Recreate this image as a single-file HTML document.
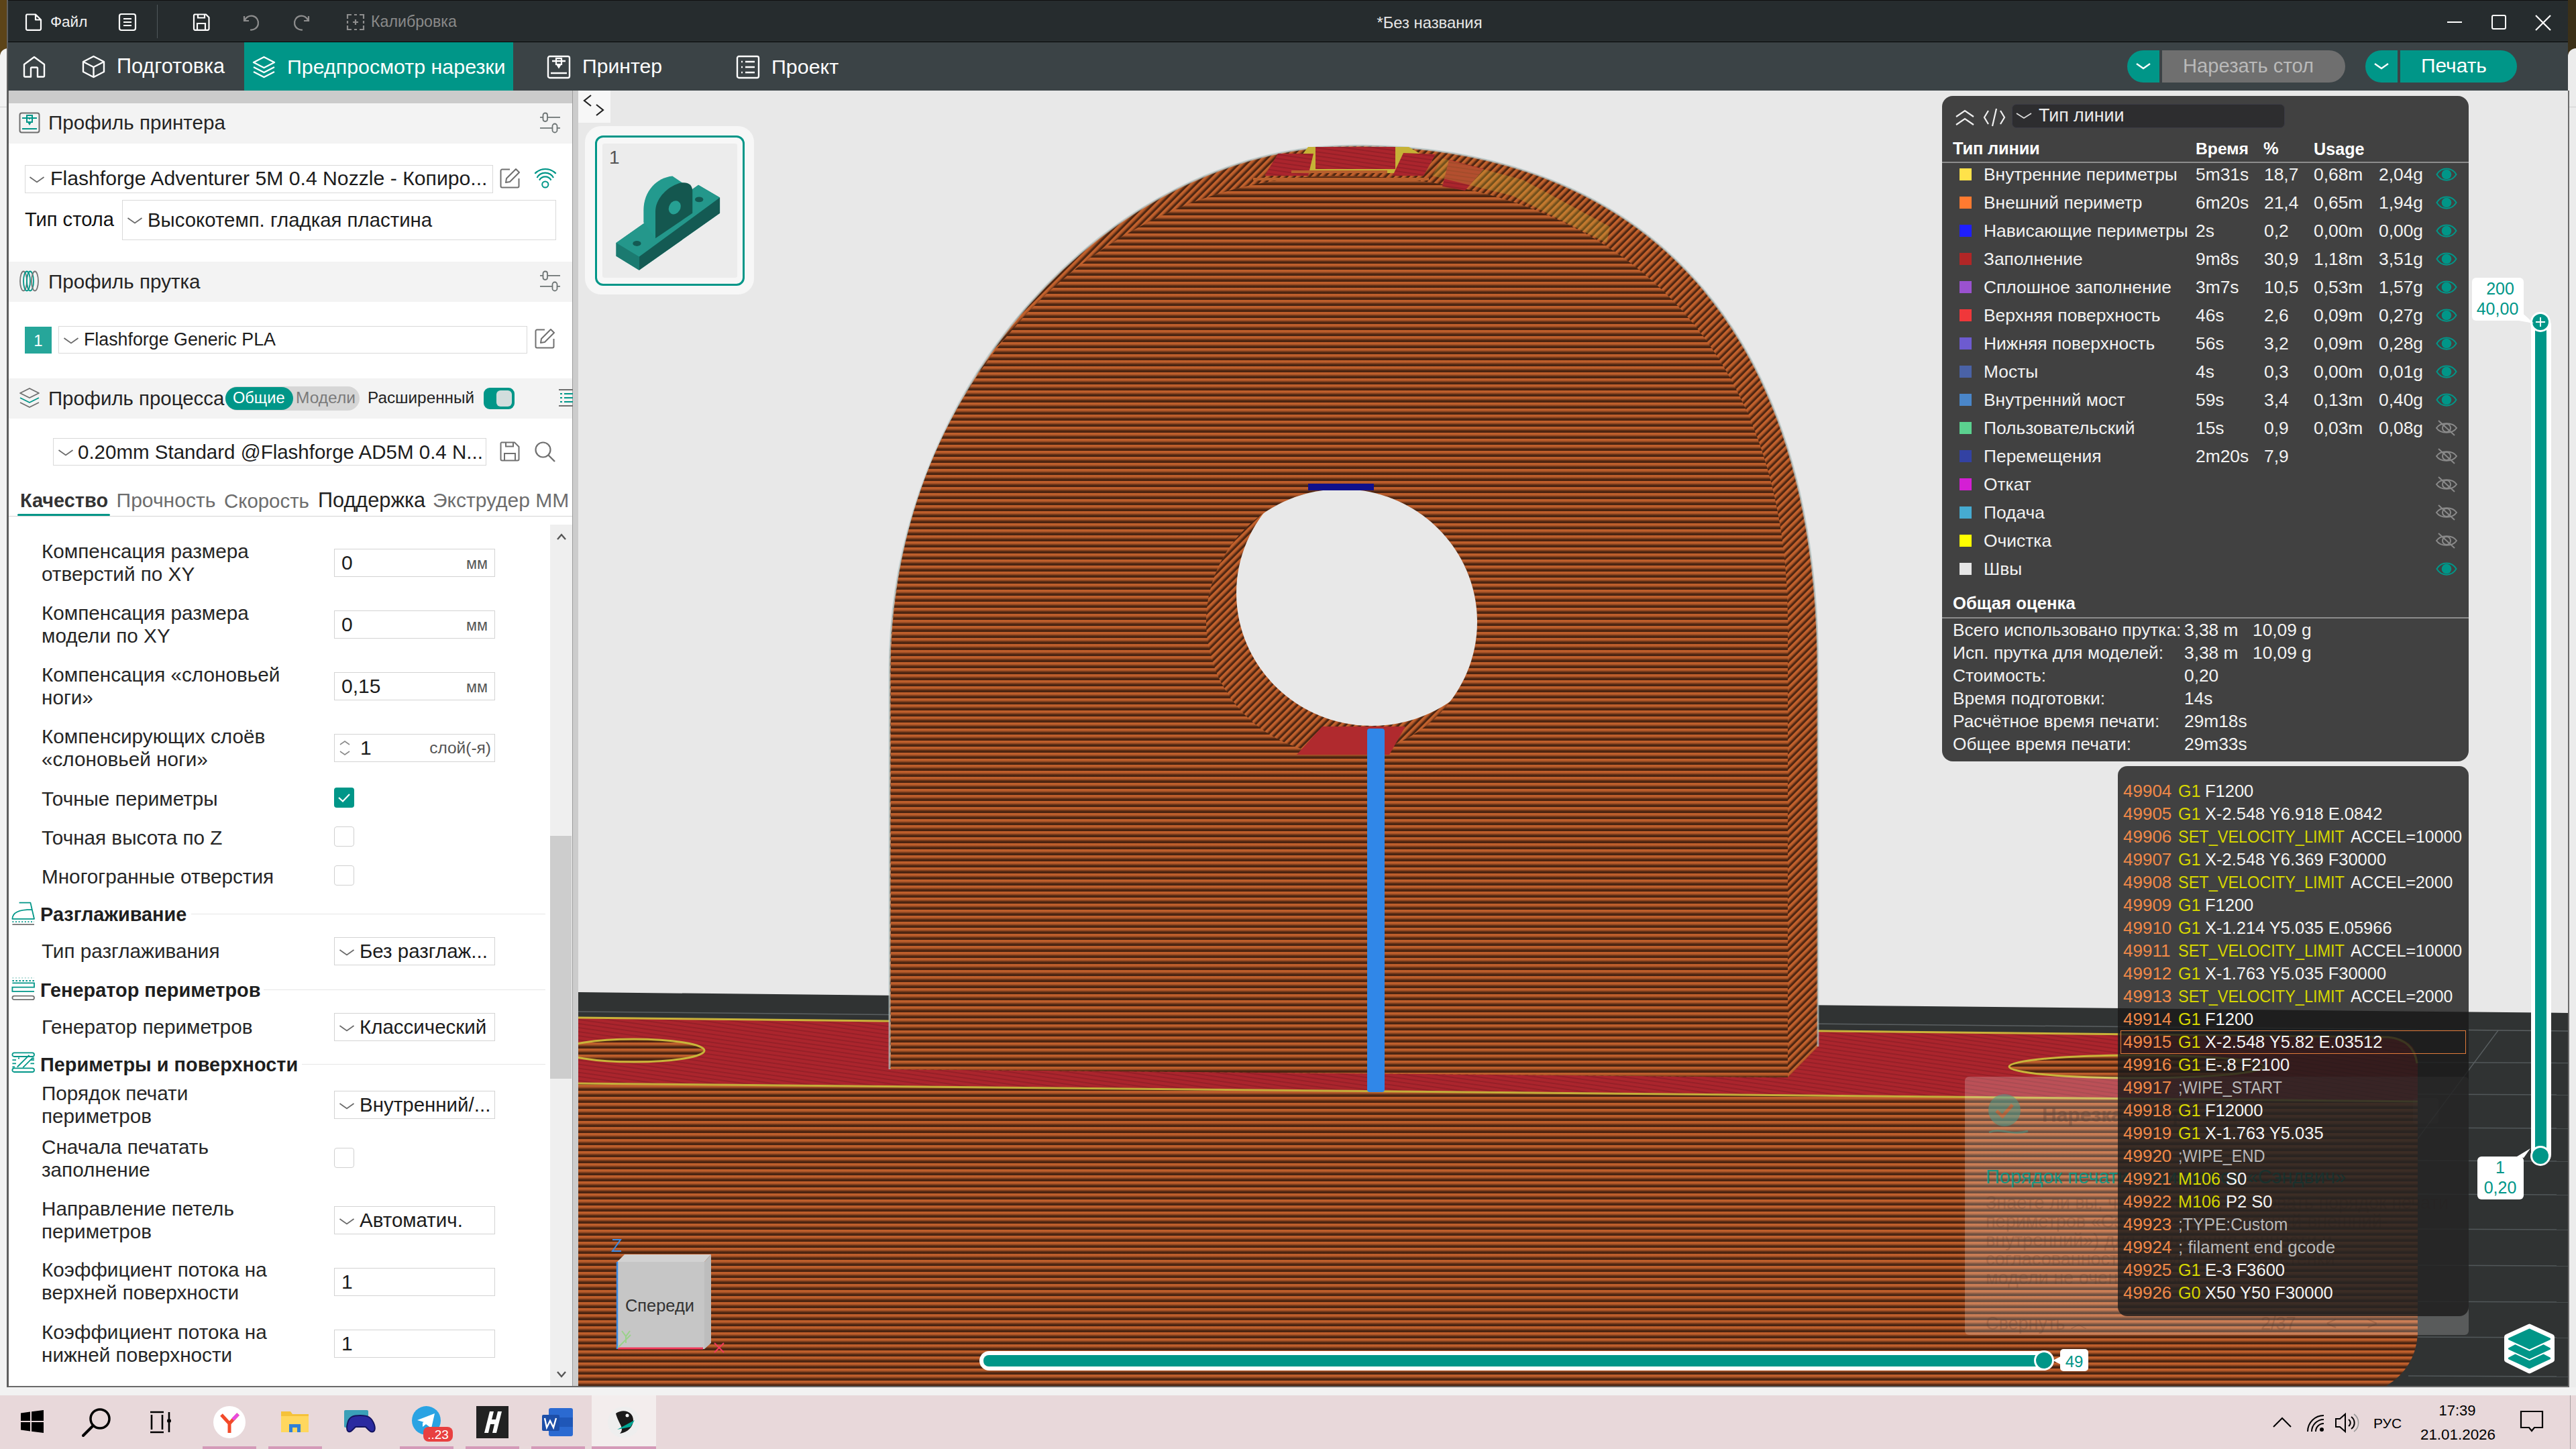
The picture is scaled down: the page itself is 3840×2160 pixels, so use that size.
<!DOCTYPE html><html><head><meta charset="utf-8"><style>html,body{margin:0;padding:0;}body{width:3840px;height:2160px;overflow:hidden;position:relative;background:#f3f3f3;font-family:"Liberation Sans",sans-serif;}.a{position:absolute;}.t{position:absolute;white-space:pre;line-height:1;}svg.a{overflow:visible;}</style></head><body>
<div class="a" style="left:0px;top:0px;width:12px;height:84px;background:#5d4418;"></div>
<div class="a" style="left:3828px;top:0px;width:12px;height:84px;background:#3b3018;"></div>
<div class="a" style="left:0px;top:72px;width:12px;height:2000px;background:#f2f2f2;border-top-left-radius:12px;"></div>
<div class="a" style="left:3828px;top:72px;width:12px;height:2000px;background:#ececec;border-top-left-radius:12px;"></div>
<div class="a" style="left:0px;top:159px;width:10px;height:1px;background:#d0d0d0;"></div>
<div class="a" style="left:3830px;top:159px;width:10px;height:1px;background:#d0d0d0;"></div>
<div class="a" style="left:10px;top:0px;width:3px;height:2068px;background:#5f5f5f;"></div>
<div class="a" style="left:13px;top:2066px;width:3815px;height:2px;background:#6a6a6a;"></div>
<div class="a" style="left:3828px;top:135px;width:2px;height:1933px;background:#6a6a6a;"></div>
<div class="a" style="left:12px;top:0px;width:3816px;height:62px;background:#262c2e;"></div>
<div class="a" style="left:12px;top:0px;width:3816px;height:1px;background:#111;"></div>
<div class="a" style="left:12px;top:62px;width:3816px;height:1px;background:#050505;"></div>
<div class="a" style="left:12px;top:63px;width:3816px;height:72px;background:#3b4346;"></div>
<svg class="a" style="left:36px;top:19px;" width="28" height="28" viewBox="0 0 28 28"><path d="M4 2.5H17L25 10.5V24a1.8 1.8 0 0 1-1.8 1.8H4.8A1.8 1.8 0 0 1 3 24V4.3A1.8 1.8 0 0 1 4.8 2.5Z M17 2.5V10.5H25" fill="none" stroke="#fff" stroke-width="2.2" stroke-linejoin="round"/></svg>
<div class="t" style="left:75.0px;top:21.9px;font-size:22.5px;color:#f2f2f2;">Файл</div>
<svg class="a" style="left:176px;top:19px;" width="28" height="28" viewBox="0 0 28 28"><rect x="2" y="2" width="24" height="24" rx="3" fill="none" stroke="#fff" stroke-width="2.2"/><path d="M8 9H20M8 14H20M8 19H20" stroke="#fff" stroke-width="2.2"/></svg>
<div class="a" style="left:234px;top:7px;width:1px;height:50px;background:#50585b;"></div>
<svg class="a" style="left:286px;top:19px;" width="28" height="28" viewBox="0 0 28 28"><path d="M4 2.5H21L25.5 7V24a1.8 1.8 0 0 1-1.8 1.8H4.8A1.8 1.8 0 0 1 3 24V4.3A1.8 1.8 0 0 1 4.8 2.5Z" fill="none" stroke="#fff" stroke-width="2.2" stroke-linejoin="round"/><path d="M9 2.5V7.5H19V2.5M8 25.8V16H20V25.8" fill="none" stroke="#fff" stroke-width="2.2"/></svg>
<svg class="a" style="left:358px;top:19px;" width="30" height="28" viewBox="0 0 30 28"><path d="M6 5V12H13" fill="none" stroke="#8d8d8d" stroke-width="2.2"/><path d="M6.5 12A10.5 10.5 0 1 1 15 25.5" fill="none" stroke="#8d8d8d" stroke-width="2.2"/></svg>
<svg class="a" style="left:436px;top:19px;" width="30" height="28" viewBox="0 0 30 28"><path d="M24 5V12H17" fill="none" stroke="#8d8d8d" stroke-width="2.2"/><path d="M23.5 12A10.5 10.5 0 1 0 15 25.5" fill="none" stroke="#8d8d8d" stroke-width="2.2"/></svg>
<svg class="a" style="left:515px;top:19px;" width="30" height="28" viewBox="0 0 30 28"><path d="M3 9V3H9M21 3H27V9M27 19V25H21M9 25H3V19M13 3H17M13 25H17M3 12V16M27 12V16M15 10V18M11 14H19" fill="none" stroke="#8d8d8d" stroke-width="2.2"/></svg>
<div class="t" style="left:553.0px;top:21.4px;font-size:23.2px;color:#8a8a8a;">Калибровка</div>
<div class="t" style="left:1631.0px;width:1000px;text-align:center;top:22.3px;font-size:23.8px;color:#e6e6e6;">*Без названия</div>
<div class="a" style="left:3648px;top:32px;width:22px;height:2px;background:#fff;"></div>
<div class="a" style="left:3714px;top:22px;width:22px;height:22px;background:transparent;border:2px solid #fff;border-radius:3px;box-sizing:border-box;"></div>
<svg class="a" style="left:3778px;top:21px;" width="26" height="26" viewBox="0 0 26 26"><path d="M2 2L24 24M24 2L2 24" stroke="#fff" stroke-width="2.2"/></svg>
<svg class="a" style="left:33px;top:81px;" width="36" height="36" viewBox="0 0 36 36"><path d="M3 15L18 4L33 15V32a1.5 1.5 0 0 1-1.5 1.5H23V21a1.5 1.5 0 0 0-1.5-1.5h-7A1.5 1.5 0 0 0 13 21V33.5H4.5A1.5 1.5 0 0 1 3 32Z" fill="none" stroke="#fff" stroke-width="2.4" stroke-linejoin="round"/></svg>
<svg class="a" style="left:121px;top:81px;" width="37" height="37" viewBox="0 0 37 37"><path d="M18.5 3L34 11V26L18.5 34L3 26V11Z M3 11L18.5 19L34 11 M18.5 19V34" fill="none" stroke="#fff" stroke-width="2.4" stroke-linejoin="round"/></svg>
<div class="t" style="left:174.0px;top:83.4px;font-size:30.6px;color:#ffffff;">Подготовка</div>
<div class="a" style="left:364px;top:63px;width:401px;height:72px;background:#009688;"></div>
<svg class="a" style="left:375px;top:81px;" width="37" height="37" viewBox="0 0 37 37"><path d="M18.5 4L34 12L18.5 20L3 12Z" fill="none" stroke="#fff" stroke-width="2.4" stroke-linejoin="round"/><path d="M3 19L18.5 27L34 19M3 26L18.5 34L34 26" fill="none" stroke="#fff" stroke-width="2.4" stroke-linejoin="round"/></svg>
<div class="t" style="left:428.0px;top:83.6px;font-size:30.4px;color:#ffffff;">Предпросмотр нарезки</div>
<svg class="a" style="left:815px;top:82px;" width="36" height="36" viewBox="0 0 36 36"><rect x="2" y="2" width="32" height="32" rx="2.5" fill="none" stroke="#fff" stroke-width="2.4"/><path d="M6 27H30M8 9H28" stroke="#fff" stroke-width="2.4"/><rect x="14" y="5" width="8" height="9" fill="none" stroke="#fff" stroke-width="2.2"/><path d="M15 14L18 19L21 14" fill="#fff" stroke="#fff" stroke-width="1.5"/></svg>
<div class="t" style="left:868.0px;top:83.7px;font-size:30.2px;color:#ffffff;">Принтер</div>
<svg class="a" style="left:1097px;top:82px;" width="36" height="36" viewBox="0 0 36 36"><rect x="2" y="2" width="32" height="32" rx="2.5" fill="none" stroke="#fff" stroke-width="2.4"/><path d="M8 10H10M14 10H28M8 18H10M14 18H28M8 26H10M14 26H28" stroke="#fff" stroke-width="2.4"/></svg>
<div class="t" style="left:1150.0px;top:83.6px;font-size:30.4px;color:#ffffff;">Проект</div>
<div class="a" style="left:3171px;top:75px;width:48px;height:48px;background:#009688;border-radius:24px 0 0 24px;"></div>
<svg class="a" style="left:3182px;top:91px;" width="26" height="16" viewBox="0 0 26 16"><path d="M3 4L13 11L23 4" fill="none" stroke="#fff" stroke-width="2.4"/></svg>
<div class="a" style="left:3223px;top:75px;width:273px;height:48px;background:#6f6f6f;border-radius:0 24px 24px 0;"></div>
<div class="t" style="left:3254.0px;top:84.0px;font-size:29.2px;color:#b9b9b9;">Нарезать стол</div>
<div class="a" style="left:3526px;top:75px;width:48px;height:48px;background:#009688;border-radius:24px 0 0 24px;"></div>
<svg class="a" style="left:3537px;top:91px;" width="26" height="16" viewBox="0 0 26 16"><path d="M3 4L13 11L23 4" fill="none" stroke="#fff" stroke-width="2.4"/></svg>
<div class="a" style="left:3578px;top:75px;width:174px;height:48px;background:#009688;border-radius:0 24px 24px 0;"></div>
<div class="t" style="left:3609.0px;top:83.4px;font-size:29.9px;color:#ffffff;">Печать</div>
<svg class="a" style="left:0px;top:0px;" width="3840" height="2160" viewBox="0 0 3840 2160"><defs>
<linearGradient id="sg" x1="0" y1="0" x2="0" y2="1">
<stop offset="0" stop-color="#b5592a"/><stop offset="0.12" stop-color="#c3612c"/><stop offset="0.34" stop-color="#b45a2a"/><stop offset="0.5" stop-color="#8a441f"/><stop offset="0.66" stop-color="#5a2c14"/><stop offset="0.78" stop-color="#4a2411"/><stop offset="1" stop-color="#4a2411"/></linearGradient>
<pattern id="stripes" patternUnits="userSpaceOnUse" x="0" y="6" width="40" height="9"><rect width="40" height="9" fill="url(#sg)"/></pattern>
<linearGradient id="bg2" x1="0" y1="0" x2="1" y2="1">
<stop offset="0" stop-color="#d06a30"/><stop offset="0.45" stop-color="#c25f2b"/><stop offset="0.7" stop-color="#6e3418"/><stop offset="1" stop-color="#56290f"/></linearGradient>
<linearGradient id="bandg" x1="0" y1="0" x2="0" y2="1"><stop offset="0" stop-color="#bb5b2a"/><stop offset="0.15" stop-color="#c8652d"/><stop offset="0.4" stop-color="#b65a2a"/><stop offset="0.56" stop-color="#8a441f"/><stop offset="0.7" stop-color="#5a2c14"/><stop offset="0.8" stop-color="#4c2511"/><stop offset="1" stop-color="#4b2511"/></linearGradient><pattern id="band" patternUnits="userSpaceOnUse" width="20" height="8" patternTransform="rotate(-45)"><rect width="20" height="8" fill="url(#bandg)"/></pattern>
<pattern id="red" patternUnits="userSpaceOnUse" width="20" height="6" patternTransform="rotate(8)"><rect width="20" height="6" fill="#ab252d"/><rect y="4" width="20" height="2" fill="#962028"/></pattern>
<clipPath id="frontHole"><ellipse cx="2000" cy="927" rx="202" ry="198"/></clipPath>
</defs><rect x="862" y="135" width="2966" height="1931" fill="#e8e8e8"/><polygon points="862,1479 3828,1510 3828,2066 862,2066" fill="#303333"/><line x1="862" y1="1508" x2="3828" y2="1537" stroke="#5b6062" stroke-width="1.5"/><line x1="3590" y1="1583.5" x2="3828" y2="1584.5" stroke="#52585a" stroke-width="1.5"/><line x1="3590" y1="1631" x2="3828" y2="1632" stroke="#52585a" stroke-width="1.5"/><line x1="3590" y1="1681" x2="3828" y2="1682" stroke="#52585a" stroke-width="1.5"/><line x1="3590" y1="1730" x2="3828" y2="1731" stroke="#52585a" stroke-width="1.5"/><line x1="3590" y1="1780" x2="3828" y2="1781" stroke="#52585a" stroke-width="1.5"/><line x1="3590" y1="1832" x2="3828" y2="1833" stroke="#52585a" stroke-width="1.5"/><line x1="3590" y1="1886" x2="3828" y2="1887" stroke="#52585a" stroke-width="1.5"/><line x1="3590" y1="1940" x2="3828" y2="1941" stroke="#52585a" stroke-width="1.5"/><line x1="3590" y1="1993" x2="3828" y2="1994" stroke="#52585a" stroke-width="1.5"/><line x1="3590" y1="2051" x2="3828" y2="2052" stroke="#52585a" stroke-width="1.5"/><line x1="3724" y1="1536" x2="3330" y2="2066" stroke="#5a6062" stroke-width="1.3"/><path d="M862,1516 L3560,1545 Q3600,1548 3604,1580 L3604,1641 L862,1614 Z" fill="url(#red)"/><path d="M862,1517 L3560,1546 Q3598,1550 3603,1585" fill="none" stroke="#c9b33a" stroke-width="3"/><ellipse cx="945" cy="1566" rx="105" ry="17" fill="url(#stripes)" stroke="#c8b53a" stroke-width="3"/><ellipse cx="3185" cy="1590" rx="190" ry="17" fill="url(#stripes)" stroke="#c8b53a" stroke-width="3"/><path d="M862,1614 L3604,1641 L3604,1990 Q3600,2040 3557,2066 L862,2066 Z" fill="url(#stripes)"/><path d="M862,1615 L3604,1642" stroke="#c4ae3a" stroke-width="3"/><path d="M1326,1594 L1326,1000 C1326,585 1651,217 2018,217 C2461,217 2710,499 2710,1000 L2710,1560 L2665,1606 Z" fill="url(#band)"/><path d="M1326,1594 L1326,1000 C1326,585 1651,217 2018,217 C2461,217 2710,499 2710,1000 L2710,1560" fill="none" stroke="#b5c6c6" stroke-width="3" opacity="0.7"/><path d="M1328,1594 L1328,1000 C1328,570 1640,262 1996,262 C2411,262 2665,515 2665,929 L2665,1606 Z" fill="url(#stripes)"/><path d="M1950,219 L2100,219 L2135,240 L2110,258 L1920,258 Z" fill="#c6b236"/><rect x="1961" y="219" width="119" height="33" fill="url(#red)"/><path d="M1905,229 L1958,229 L1950,262 L1885,262 Z" fill="url(#red)"/><path d="M2092,228 L2140,230 L2122,262 L2076,262 Z" fill="url(#red)"/><path d="M2160,238 L2212,252 L2184,284 L2150,278 Z" fill="url(#red)"/><path d="M2150,236 L2270,268 L2400,338 L2395,362 L2255,292 L2135,262 Z" fill="#c6b236" opacity="0.3"/><path d="M1925,256 L2068,256 M1868,267 L2130,267" stroke="#b8602c" stroke-width="4"/><ellipse cx="2000" cy="927" rx="202" ry="198" fill="url(#band)"/><ellipse cx="2045" cy="884" rx="202" ry="198" fill="#e8e8e8" clip-path="url(#frontHole)"/><path d="M1933,1125 L1971,1083 L2095,1083 L2071,1125 Z" fill="#b02a2e"/><rect x="1950" y="721" width="98" height="10" fill="#10108c"/><rect x="2038" y="1086" width="26" height="542" rx="4" fill="#3087e8"/></svg>
<div class="a" style="left:13px;top:135px;width:840px;height:19px;background:#cbcbcb;"></div>
<div class="a" style="left:13px;top:154px;width:840px;height:1912px;background:#ffffff;"></div>
<div class="a" style="left:853px;top:135px;width:1px;height:1931px;background:#9c9c9c;"></div>
<div class="a" style="left:854px;top:135px;width:8px;height:1931px;background:#cccccc;"></div>
<div class="a" style="left:13px;top:154px;width:840px;height:60px;background:#f3f3f3;"></div>
<div class="a" style="left:13px;top:390px;width:840px;height:60px;background:#f3f3f3;"></div>
<div class="a" style="left:13px;top:564px;width:840px;height:60px;background:#f3f3f3;"></div>
<svg class="a" style="left:28px;top:167px;" width="32" height="32" viewBox="0 0 32 32"><rect x="1.5" y="1.5" width="29" height="29" rx="3" fill="none" stroke="#6e6e6e" stroke-width="2"/><path d="M5 9H27M5 25H27" stroke="#009688" stroke-width="2"/><rect x="12" y="5" width="8" height="10" fill="none" stroke="#009688" stroke-width="2"/><path d="M13 15L16 20L19 15Z" fill="#009688"/><rect x="15" y="9" width="2" height="2" fill="#009688"/></svg>
<div class="t" style="left:72.0px;top:168.1px;font-size:29.6px;color:#242424;">Профиль принтера</div>
<svg class="a" style="left:805px;top:167px;" width="32" height="32" viewBox="0 0 32 32"><path d="M0 7.8H30M0 23.9H30" stroke="#6d7474" stroke-width="1.8"/><rect x="4.5" y="1.5" width="6.5" height="12.5" rx="3.2" fill="#f3f3f3" stroke="#6d7474" stroke-width="1.8"/><rect x="18.5" y="17.5" width="7" height="13" rx="3.5" fill="#f3f3f3" stroke="#6d7474" stroke-width="1.8"/></svg>
<div class="a" style="left:37px;top:246px;width:698px;height:42px;background:#fff;border:1px solid #d9d9d9;box-sizing:border-box;"></div>
<svg class="a" style="left:43px;top:262px;" width="24" height="12" viewBox="0 0 24 12"><path d="M1.5 2L12 9.5L22.5 2" fill="none" stroke="#6a6a6a" stroke-width="1.8"/></svg>
<div class="t" style="left:75.0px;top:250.9px;font-size:30.2px;color:#1c1c1c;">Flashforge Adventurer 5M 0.4 Nozzle - Копиро...</div>
<svg class="a" style="left:744px;top:250px;" width="32" height="32" viewBox="0 0 32 32"><path d="M16 2.5H4.5A2 2 0 0 0 2.5 4.5V27.5A2 2 0 0 0 4.5 29.5H27.5A2 2 0 0 0 29.5 27.5V16" fill="none" stroke="#707070" stroke-width="2"/><path d="M10 22L11 16L25 2L30 7L16 21Z" fill="none" stroke="#707070" stroke-width="2" stroke-linejoin="round"/></svg>
<svg class="a" style="left:793px;top:249px;" width="38" height="36" viewBox="0 0 38 36"><path d="M4.3 9.7A21.7 21.7 0 0 1 35.7 9.7M7.5 16A13.9 13.9 0 0 1 32 16M11 19.6A10 10 0 0 1 28.5 19.6" fill="none" stroke="#009688" stroke-width="2.2"/><circle cx="19.8" cy="26" r="4.6" fill="none" stroke="#009688" stroke-width="2"/></svg>
<div class="t" style="left:37.0px;top:312.9px;font-size:29.1px;color:#111111;">Тип стола</div>
<div class="a" style="left:182px;top:298px;width:647px;height:60px;background:#fff;border:1px solid #d9d9d9;box-sizing:border-box;"></div>
<svg class="a" style="left:189px;top:323px;" width="24" height="12" viewBox="0 0 24 12"><path d="M1.5 2L12 9.5L22.5 2" fill="none" stroke="#6a6a6a" stroke-width="1.8"/></svg>
<div class="t" style="left:220.0px;top:313.1px;font-size:29.4px;color:#1c1c1c;">Высокотемп. гладкая пластина</div>
<svg class="a" style="left:28px;top:402px;" width="32" height="34" viewBox="0 0 32 34"><ellipse cx="7" cy="17" rx="5" ry="14.5" fill="none" stroke="#777" stroke-width="1.8"/><ellipse cx="12" cy="17" rx="5" ry="14.5" fill="none" stroke="#009688" stroke-width="1.8"/><ellipse cx="17" cy="17" rx="5" ry="14.5" fill="none" stroke="#009688" stroke-width="1.8"/><ellipse cx="24" cy="17" rx="5" ry="14.5" fill="none" stroke="#777" stroke-width="1.8"/></svg>
<div class="t" style="left:72.0px;top:404.7px;font-size:29.6px;color:#242424;">Профиль прутка</div>
<svg class="a" style="left:805px;top:403px;" width="32" height="32" viewBox="0 0 32 32"><path d="M0 7.8H30M0 23.9H30" stroke="#6d7474" stroke-width="1.8"/><rect x="4.5" y="1.5" width="6.5" height="12.5" rx="3.2" fill="#f3f3f3" stroke="#6d7474" stroke-width="1.8"/><rect x="18.5" y="17.5" width="7" height="13" rx="3.5" fill="#f3f3f3" stroke="#6d7474" stroke-width="1.8"/></svg>
<div class="a" style="left:37px;top:487px;width:40px;height:40px;background:#26a69a;"></div>
<div class="t" style="left:-443.0px;width:1000px;text-align:center;top:495.7px;font-size:24px;color:#ffffff;">1</div>
<div class="a" style="left:87px;top:486px;width:699px;height:41px;background:#fff;border:1px solid #d9d9d9;box-sizing:border-box;"></div>
<svg class="a" style="left:94px;top:502px;" width="24" height="12" viewBox="0 0 24 12"><path d="M1.5 2L12 9.5L22.5 2" fill="none" stroke="#6a6a6a" stroke-width="1.8"/></svg>
<div class="t" style="left:125.0px;top:493.3px;font-size:26.8px;color:#1c1c1c;">Flashforge Generic PLA</div>
<svg class="a" style="left:796px;top:489px;" width="32" height="32" viewBox="0 0 32 32"><path d="M16 2.5H4.5A2 2 0 0 0 2.5 4.5V27.5A2 2 0 0 0 4.5 29.5H27.5A2 2 0 0 0 29.5 27.5V16" fill="none" stroke="#707070" stroke-width="2"/><path d="M10 22L11 16L25 2L30 7L16 21Z" fill="none" stroke="#707070" stroke-width="2" stroke-linejoin="round"/></svg>
<svg class="a" style="left:28px;top:576px;" width="32" height="34" viewBox="0 0 32 34"><path d="M16 3L30 10L16 17L2 10Z" fill="none" stroke="#6e6e6e" stroke-width="1.8" stroke-linejoin="round"/><path d="M2 17L16 24L30 17" fill="none" stroke="#009688" stroke-width="1.8" stroke-linejoin="round"/><path d="M2 24L16 31L30 24" fill="none" stroke="#6e6e6e" stroke-width="1.8" stroke-linejoin="round"/></svg>
<div class="t" style="left:72.0px;top:579.1px;font-size:29.4px;color:#242424;">Профиль процесса</div>
<div class="a" style="left:336px;top:576px;width:200px;height:36px;background:#d6d6d6;border-radius:18px;"></div>
<div class="a" style="left:336px;top:577px;width:101px;height:34px;background:#009688;border-radius:17px;"></div>
<div class="t" style="left:347.0px;top:581.5px;font-size:23.6px;color:#ffffff;">Общие</div>
<div class="t" style="left:441.0px;top:580.8px;font-size:24.5px;color:#7a7a7a;">Модели</div>
<div class="t" style="left:548.0px;top:580.9px;font-size:24.3px;color:#222222;">Расширенный</div>
<div class="a" style="left:721px;top:578px;width:46px;height:32px;background:#009688;border-radius:9px;"></div>
<div class="a" style="left:740px;top:582px;width:23px;height:24px;background:#d2dddd;border-radius:6px;"></div>
<svg class="a" style="left:830px;top:576px;" width="24" height="34" viewBox="0 0 24 34"><path d="M3 5H24M3 29H24" stroke="#6e6e6e" stroke-width="1.8"/><path d="M5 11H8M11 11H24M5 17H8M11 17H24M5 23H8M11 23H24" stroke="#009688" stroke-width="1.8"/></svg>
<div class="a" style="left:79px;top:653px;width:646px;height:41px;background:#fff;border:1px solid #d9d9d9;box-sizing:border-box;"></div>
<svg class="a" style="left:86px;top:669px;" width="24" height="12" viewBox="0 0 24 12"><path d="M1.5 2L12 9.5L22.5 2" fill="none" stroke="#6a6a6a" stroke-width="1.8"/></svg>
<div class="t" style="left:116.0px;top:659.0px;font-size:29.5px;color:#1c1c1c;">0.20mm Standard @Flashforge AD5M 0.4 N...</div>
<svg class="a" style="left:744px;top:657px;" width="32" height="32" viewBox="0 0 32 32"><path d="M3.5 2.5H23L29.5 9V27.5A2 2 0 0 1 27.5 29.5H4.5A2 2 0 0 1 2.5 27.5V4.5A2 2 0 0 1 3.5 2.5Z" fill="none" stroke="#707070" stroke-width="2" stroke-linejoin="round"/><path d="M10 2.5V8.5H21V2.5M8 29.5V19H24V29.5" fill="none" stroke="#707070" stroke-width="2"/></svg>
<svg class="a" style="left:796px;top:657px;" width="34" height="34" viewBox="0 0 34 34"><circle cx="13.5" cy="13.5" r="11" fill="none" stroke="#707070" stroke-width="2.2"/><path d="M21.5 21.5L31 31" stroke="#707070" stroke-width="2.4"/></svg>
<div class="t" style="left:30.0px;top:732.0px;font-size:28.9px;color:#333333;font-weight:700;">Качество</div>
<div class="t" style="left:173.5px;top:731.0px;font-size:30.1px;color:#6d6d6d;">Прочность</div>
<div class="t" style="left:334.0px;top:731.6px;font-size:29.4px;color:#6d6d6d;">Скорость</div>
<div class="t" style="left:474.0px;top:730.5px;font-size:30.7px;color:#222222;">Поддержка</div>
<div class="t" style="left:645.0px;top:731.1px;font-size:30.0px;color:#6d6d6d;">Экструдер ММ</div>
<div class="a" style="left:26px;top:766px;width:138px;height:3px;background:#009688;border-radius:2px;"></div>
<div class="a" style="left:13px;top:769px;width:840px;height:1px;background:#d4d4d4;"></div>
<div class="a" style="left:820px;top:782px;width:33px;height:1284px;background:#efefef;"></div>
<div class="a" style="left:820px;top:1246px;width:32px;height:362px;background:#cdcdcd;"></div>
<svg class="a" style="left:829px;top:794px;" width="16" height="12" viewBox="0 0 16 12"><path d="M2 10L8 3L14 10" fill="none" stroke="#555" stroke-width="2.4"/></svg>
<svg class="a" style="left:829px;top:2043px;" width="16" height="12" viewBox="0 0 16 12"><path d="M2 2L8 9L14 2" fill="none" stroke="#555" stroke-width="2.4"/></svg>
<div class="t" style="left:62.0px;top:806.9px;font-size:29.7px;color:#262626;">Компенсация размера</div>
<div class="t" style="left:62.0px;top:840.9px;font-size:29.7px;color:#262626;">отверстий по XY</div>
<div class="a" style="left:498px;top:818px;width:240px;height:42px;background:#fff;border:1.5px solid #d3d3d3;box-sizing:border-box;"></div>
<div class="t" style="left:509.0px;top:823.6px;font-size:30px;color:#1c1c1c;">0</div>
<div class="t" style="right:3113.0px;top:829.3px;font-size:23.3px;color:#555555;">мм</div>
<div class="t" style="left:62.0px;top:898.9px;font-size:29.7px;color:#262626;">Компенсация размера</div>
<div class="t" style="left:62.0px;top:932.9px;font-size:29.7px;color:#262626;">модели по XY</div>
<div class="a" style="left:498px;top:910px;width:240px;height:42px;background:#fff;border:1.5px solid #d3d3d3;box-sizing:border-box;"></div>
<div class="t" style="left:509.0px;top:915.6px;font-size:30px;color:#1c1c1c;">0</div>
<div class="t" style="right:3113.0px;top:921.3px;font-size:23.3px;color:#555555;">мм</div>
<div class="t" style="left:62.0px;top:990.9px;font-size:29.7px;color:#262626;">Компенсация «слоновьей</div>
<div class="t" style="left:62.0px;top:1024.9px;font-size:29.7px;color:#262626;">ноги»</div>
<div class="a" style="left:498px;top:1002px;width:240px;height:42px;background:#fff;border:1.5px solid #d3d3d3;box-sizing:border-box;"></div>
<div class="t" style="left:509.0px;top:1007.6px;font-size:30px;color:#1c1c1c;">0,15</div>
<div class="t" style="right:3113.0px;top:1013.3px;font-size:23.3px;color:#555555;">мм</div>
<div class="t" style="left:62.0px;top:1082.9px;font-size:29.7px;color:#262626;">Компенсирующих слоёв</div>
<div class="t" style="left:62.0px;top:1116.9px;font-size:29.7px;color:#262626;">«слоновьей ноги»</div>
<div class="a" style="left:498px;top:1094px;width:240px;height:42px;background:#fff;border:1.5px solid #d3d3d3;box-sizing:border-box;"></div>
<svg class="a" style="left:503px;top:1101px;" width="22" height="28" viewBox="0 0 22 28"><path d="M4 9L11 4L18 9M4 19L11 24L18 19" fill="none" stroke="#8a8a8a" stroke-width="1.6"/></svg>
<div class="t" style="left:537.0px;top:1099.6px;font-size:30px;color:#1c1c1c;">1</div>
<div class="t" style="right:3108.0px;top:1103.3px;font-size:24.5px;color:#555555;">слой(-я)</div>
<div class="t" style="left:62.0px;top:1176.4px;font-size:29.7px;color:#262626;">Точные периметры</div>
<div class="a" style="left:498px;top:1174px;width:30px;height:30px;background:#009688;border-radius:4px;"></div>
<svg class="a" style="left:498px;top:1174px;" width="30" height="30" viewBox="0 0 30 30"><path d="M7 15L13 20.5L23 10" fill="none" stroke="#fff" stroke-width="2.2"/></svg>
<div class="t" style="left:62.0px;top:1233.9px;font-size:29.7px;color:#262626;">Точная высота по Z</div>
<div class="a" style="left:498px;top:1232px;width:30px;height:30px;background:#fff;border:1.5px solid #d0d0d0;border-radius:4px;box-sizing:border-box;"></div>
<div class="t" style="left:62.0px;top:1291.9px;font-size:29.7px;color:#262626;">Многогранные отверстия</div>
<div class="a" style="left:498px;top:1290px;width:30px;height:30px;background:#fff;border:1.5px solid #d0d0d0;border-radius:4px;box-sizing:border-box;"></div>
<svg class="a" style="left:17px;top:1344px;" width="36" height="36" viewBox="0 0 36 36"><path d="M11.6 1.6H28.4L34 25.8H1.4C1.4 16.5 11.6 11.8 30.2 11.8" fill="none" stroke="#009688" stroke-width="1.8" stroke-linejoin="round"/><path d="M1.4 30.1H34" stroke="#009688" stroke-width="1.6" stroke-dasharray="2 2.6"/><path d="M1.4 34.2H34" stroke="#707070" stroke-width="1.8"/></svg>
<div class="t" style="left:60.0px;top:1348.5px;font-size:28.9px;color:#1e1e1e;font-weight:700;">Разглаживание</div>
<div class="a" style="left:285px;top:1362px;width:528px;height:1px;background:#e6e6e6;"></div>
<div class="t" style="left:62.0px;top:1402.9px;font-size:29.7px;color:#262626;">Тип разглаживания</div>
<div class="a" style="left:498px;top:1397px;width:240px;height:42px;background:#fff;border:1.5px solid #d3d3d3;box-sizing:border-box;"></div>
<svg class="a" style="left:505px;top:1414px;" width="24" height="12" viewBox="0 0 24 12"><path d="M1.5 2L12 9.5L22.5 2" fill="none" stroke="#6a6a6a" stroke-width="1.8"/></svg>
<div class="t" style="left:536.0px;top:1403.0px;font-size:29.5px;color:#1c1c1c;">Без разглаж...</div>
<svg class="a" style="left:17px;top:1457px;" width="36" height="36" viewBox="0 0 36 36"><path d="M1.4 0.8H34" stroke="#9fd3cd" stroke-width="1.6" stroke-dasharray="2 2.6"/><path d="M1.4 5H34" stroke="#009688" stroke-width="1.8" stroke-dasharray="2.5 2.5"/><path d="M1.4 8.3H34V14.6H1.4V20.9H34" fill="none" stroke="#009688" stroke-width="1.8"/><rect x="1.4" y="27.6" width="32.6" height="5.6" rx="2.8" fill="none" stroke="#707070" stroke-width="1.8"/></svg>
<div class="t" style="left:60.0px;top:1461.5px;font-size:28.9px;color:#1e1e1e;font-weight:700;">Генератор периметров</div>
<div class="a" style="left:393px;top:1475px;width:420px;height:1px;background:#e6e6e6;"></div>
<div class="t" style="left:62.0px;top:1515.9px;font-size:29.7px;color:#262626;">Генератор периметров</div>
<div class="a" style="left:498px;top:1510px;width:240px;height:42px;background:#fff;border:1.5px solid #d3d3d3;box-sizing:border-box;"></div>
<svg class="a" style="left:505px;top:1527px;" width="24" height="12" viewBox="0 0 24 12"><path d="M1.5 2L12 9.5L22.5 2" fill="none" stroke="#6a6a6a" stroke-width="1.8"/></svg>
<div class="t" style="left:536.0px;top:1516.0px;font-size:29.5px;color:#1c1c1c;">Классический</div>
<svg class="a" style="left:17px;top:1568px;" width="36" height="36" viewBox="0 0 36 36"><rect x="1.4" y="1.4" width="32.6" height="5.6" rx="2.8" fill="none" stroke="#009688" stroke-width="1.8"/><rect x="1.4" y="24.3" width="32.6" height="5.7" rx="2.8" fill="none" stroke="#009688" stroke-width="1.8"/><path d="M1.4 12.2H7M1.4 17.4H7M1.4 22.5H5M28.4 12.2H34M28.4 17.4H34M30.5 9.5H34" stroke="#009688" stroke-width="1.8"/><path d="M8.8 22.5L26.5 4.8M17.2 23.4L31.2 9.4M10 9.5H12" stroke="#009688" stroke-width="1.8"/></svg>
<div class="t" style="left:60.0px;top:1572.5px;font-size:28.9px;color:#1e1e1e;font-weight:700;">Периметры и поверхности</div>
<div class="a" style="left:450px;top:1586px;width:363px;height:1px;background:#e6e6e6;"></div>
<div class="t" style="left:62.0px;top:1614.9px;font-size:29.7px;color:#262626;">Порядок печати</div>
<div class="t" style="left:62.0px;top:1648.9px;font-size:29.7px;color:#262626;">периметров</div>
<div class="a" style="left:498px;top:1626px;width:240px;height:42px;background:#fff;border:1.5px solid #d3d3d3;box-sizing:border-box;"></div>
<svg class="a" style="left:505px;top:1643px;" width="24" height="12" viewBox="0 0 24 12"><path d="M1.5 2L12 9.5L22.5 2" fill="none" stroke="#6a6a6a" stroke-width="1.8"/></svg>
<div class="t" style="left:536.0px;top:1632.0px;font-size:29.5px;color:#1c1c1c;">Внутренний/...</div>
<div class="t" style="left:62.0px;top:1694.9px;font-size:29.7px;color:#262626;">Сначала печатать</div>
<div class="t" style="left:62.0px;top:1728.9px;font-size:29.7px;color:#262626;">заполнение</div>
<div class="a" style="left:498px;top:1711px;width:30px;height:30px;background:#fff;border:1.5px solid #d0d0d0;border-radius:4px;box-sizing:border-box;"></div>
<div class="t" style="left:62.0px;top:1786.9px;font-size:29.7px;color:#262626;">Направление петель</div>
<div class="t" style="left:62.0px;top:1820.9px;font-size:29.7px;color:#262626;">периметров</div>
<div class="a" style="left:498px;top:1798px;width:240px;height:42px;background:#fff;border:1.5px solid #d3d3d3;box-sizing:border-box;"></div>
<svg class="a" style="left:505px;top:1815px;" width="24" height="12" viewBox="0 0 24 12"><path d="M1.5 2L12 9.5L22.5 2" fill="none" stroke="#6a6a6a" stroke-width="1.8"/></svg>
<div class="t" style="left:536.0px;top:1804.0px;font-size:29.5px;color:#1c1c1c;">Автоматич.</div>
<div class="t" style="left:62.0px;top:1878.4px;font-size:29.7px;color:#262626;">Коэффициент потока на</div>
<div class="t" style="left:62.0px;top:1912.4px;font-size:29.7px;color:#262626;">верхней поверхности</div>
<div class="a" style="left:498px;top:1890px;width:240px;height:42px;background:#fff;border:1.5px solid #d3d3d3;box-sizing:border-box;"></div>
<div class="t" style="left:509.0px;top:1895.6px;font-size:30px;color:#1c1c1c;">1</div>
<div class="t" style="left:62.0px;top:1970.9px;font-size:29.7px;color:#262626;">Коэффициент потока на</div>
<div class="t" style="left:62.0px;top:2004.9px;font-size:29.7px;color:#262626;">нижней поверхности</div>
<div class="a" style="left:498px;top:1982px;width:240px;height:42px;background:#fff;border:1.5px solid #d3d3d3;box-sizing:border-box;"></div>
<div class="t" style="left:509.0px;top:1987.6px;font-size:30px;color:#1c1c1c;">1</div>
<div class="a" style="left:862px;top:135px;width:48px;height:48px;background:#f7f7f7;"></div>
<svg class="a" style="left:868px;top:140px;" width="36" height="40" viewBox="0 0 36 40"><path d="M13 2L3 10L13 18M21 16L31 24L21 32" fill="none" stroke="#222" stroke-width="2.2"/></svg>
<div class="a" style="left:872px;top:188px;width:252px;height:251px;background:#f7f7f7;border-radius:24px;"></div>
<div class="a" style="left:887px;top:202px;width:223px;height:224px;background:transparent;border:3.3px solid #009688;border-radius:12px;box-sizing:border-box;"></div>
<div class="a" style="left:898px;top:214px;width:201px;height:200px;background:#ececec;border-radius:3px;"></div>
<div class="t" style="left:908.0px;top:221.3px;font-size:28px;color:#555555;">1</div>
<svg class="a" style="left:860px;top:130px;" width="280" height="320" viewBox="0 0 1268 1449"><g>
<path d="M265,1050 L820,660 L965,745 L965,850 L420,1235 L265,1140 Z" fill="#1f8d82"/>
<path d="M265,1050 L820,660 L965,745 L420,1145 Z" fill="#24978b"/>
<path d="M420,1145 L965,745 L965,850 L420,1235 Z" fill="#145a53"/>
<path d="M265,1050 L420,1145 L420,1235 L265,1140 Z" fill="#1b7a70"/>
<path d="M450,912 L450,830 C450,700 540,610 645,600 L780,690 L780,850 L530,1020 Z" fill="#239a8e"/>
<path d="M530,1020 L780,850 L780,700 C780,640 720,630 660,660 C580,700 530,770 530,840 Z" fill="#14574f"/>
<ellipse cx="660" cy="812" rx="38" ry="48" transform="rotate(30 660 812)" fill="#26a093"/>
<ellipse cx="405" cy="1055" rx="28" ry="18" fill="#145a53"/>
<ellipse cx="825" cy="758" rx="28" ry="18" fill="#145a53"/>
</g></svg>
<svg class="a" style="left:890px;top:1830px;" width="210" height="200" viewBox="0 0 210 200"><path d="M30 51 L41 40 L170 40 L160 51 Z" fill="#d2d2d2"/>
<path d="M160 51 L170 40 L170 172 L160 181 Z" fill="#bdbdbd"/>
<rect x="30" y="51" width="130" height="130" fill="#c6c6c6"/>
<path d="M30 51V181" stroke="#3a8ae6" stroke-width="2.5"/>
<path d="M31 180H158" stroke="#f03a5a" stroke-width="3"/>
<path d="M31 179L50 160" stroke="#9bd28a" stroke-width="2"/>
<path d="M23 18H35L23 35H36" fill="none" stroke="#3a8ae6" stroke-width="2"/>
<path d="M175 172L189 186M189 172L175 186" stroke="#f03a5a" stroke-width="2"/>
<path d="M37 154L43 162L49 154M43 162V172" fill="none" stroke="#9bd28a" stroke-width="2"/></svg>
<div class="t" style="left:932.0px;top:1933.5px;font-size:25.4px;color:#333333;">Спереди</div>
<div class="a" style="left:2929px;top:1605px;width:751px;height:385px;background:rgba(255,255,255,0.2);border-radius:6px;"></div>
<div class="a" style="left:2929px;top:1605px;width:751px;height:385px;overflow:hidden;opacity:0.55">
<svg class="a" style="left:34px;top:25px" width="90" height="80" viewBox="0 0 90 80"><circle cx="25" cy="25" r="24" fill="#4b9a8a"/><path d="M13 26L22 34L37 17" fill="none" stroke="#c86a3a" stroke-width="5"/><path d="M2 58C20 50 35 64 60 56" stroke="#4b9a8a" stroke-width="3" fill="none"/></svg>
</div>
<div class="a" style="left:2929px;top:1605px;width:751px;height:385px;overflow:hidden">
<div class="t" style="left:115.0px;top:41.6px;font-size:30px;color:#5a4036;font-weight:700;opacity:0.38;">Нарезка завершена</div>
<div class="t" style="left:31.0px;top:135.4px;font-size:29px;color:#009a8a;opacity:0.85;">Порядок печати периметров «Сэндвич»</div>
<div class="t" style="left:31.0px;top:175.1px;font-size:27px;color:#5a3a2a;opacity:0.22;">Знаете ли вы, что можно использовать порядок печати</div>
<div class="t" style="left:31.0px;top:203.1px;font-size:27px;color:#5a3a2a;opacity:0.22;">периметров «Сэндвич» («внутренний-внешний-</div>
<div class="t" style="left:31.0px;top:231.1px;font-size:27px;color:#5a3a2a;opacity:0.22;">внутренний») для повышения точности и</div>
<div class="t" style="left:31.0px;top:259.1px;font-size:27px;color:#5a3a2a;opacity:0.22;">согласованности при условии, что стенки</div>
<div class="t" style="left:31.0px;top:287.1px;font-size:27px;color:#5a3a2a;opacity:0.22;">модели не очень крутые?</div>
<div class="t" style="left:31.0px;top:355.1px;font-size:27px;color:#5a3a2a;opacity:0.25;">Свернуть ︿</div>
<div class="t" style="left:441.0px;top:355.1px;font-size:27px;color:#5a3a2a;opacity:0.25;">2/37      &lt;      &gt;</div>
<div class="a" style="left:668px;top:32px;width:38px;height:38px;background:rgba(255,255,255,0.08);border-radius:4px;"></div>
</div>
<div class="a" style="left:2895px;top:143px;width:785px;height:992px;background:rgba(26,26,26,0.81);border-radius:16px;"></div>
<svg class="a" style="left:2913px;top:160px;" width="32" height="30" viewBox="0 0 32 30"><path d="M3 14L16 5L29 14M3 26L16 17L29 26" fill="none" stroke="#f0f0f0" stroke-width="2.2"/></svg>
<svg class="a" style="left:2955px;top:158px;" width="36" height="34" viewBox="0 0 36 34"><path d="M9 7L3 17L9 27M27 7L33 17L27 27M21 4L15 30" fill="none" stroke="#f0f0f0" stroke-width="2.2"/></svg>
<div class="a" style="left:2999px;top:155px;width:407px;height:36px;background:#2d2d2f;border:1.5px solid #3b3b45;border-radius:7px;box-sizing:border-box;"></div>
<svg class="a" style="left:3004px;top:166px;" width="26" height="14" viewBox="0 0 26 14"><path d="M2 3L13 10L24 3" fill="none" stroke="#ddd" stroke-width="1.8"/></svg>
<div class="t" style="left:3039.0px;top:159.3px;font-size:26.8px;color:#ececec;">Тип линии</div>
<div class="t" style="left:2911.0px;top:209.4px;font-size:25.5px;color:#ffffff;font-weight:700;letter-spacing:-0.2px;">Тип линии</div>
<div class="t" style="left:3273.0px;top:210.1px;font-size:24.7px;color:#ffffff;font-weight:700;">Время</div>
<div class="t" style="left:3374.0px;top:209.4px;font-size:25.5px;color:#ffffff;font-weight:700;">%</div>
<div class="t" style="left:3449.0px;top:209.7px;font-size:25.2px;color:#ffffff;font-weight:700;">Usage</div>
<div class="a" style="left:2895px;top:241px;width:785px;height:1.5px;background:#8c8c8c;"></div>
<div class="a" style="left:2921px;top:251px;width:18px;height:18px;background:#ffe24a;"></div>
<div class="t" style="left:2957.0px;top:246.6px;font-size:26.4px;color:#f2f2f2;">Внутренние периметры</div>
<div class="t" style="left:3273.0px;top:246.6px;font-size:26.4px;color:#f2f2f2;">5m31s</div>
<div class="t" style="left:3375.0px;top:246.6px;font-size:26.4px;color:#f2f2f2;">18,7</div>
<div class="t" style="left:3449.0px;top:246.6px;font-size:26.4px;color:#f2f2f2;">0,68m</div>
<div class="t" style="left:3546.0px;top:246.6px;font-size:26.4px;color:#f2f2f2;">2,04g</div>
<svg class="a" style="left:3630px;top:247px" width="34" height="26" viewBox="0 0 34 26"><path d="M2.5 13C9 1.5 25 1.5 31.5 13C25 24.5 9 24.5 2.5 13Z" fill="none" stroke="#009688" stroke-width="2"/><circle cx="17" cy="13" r="7.3" fill="#009688"/></svg>
<div class="a" style="left:2921px;top:293px;width:18px;height:18px;background:#ff7a30;"></div>
<div class="t" style="left:2957.0px;top:288.6px;font-size:26.4px;color:#f2f2f2;">Внешний периметр</div>
<div class="t" style="left:3273.0px;top:288.6px;font-size:26.4px;color:#f2f2f2;">6m20s</div>
<div class="t" style="left:3375.0px;top:288.6px;font-size:26.4px;color:#f2f2f2;">21,4</div>
<div class="t" style="left:3449.0px;top:288.6px;font-size:26.4px;color:#f2f2f2;">0,65m</div>
<div class="t" style="left:3546.0px;top:288.6px;font-size:26.4px;color:#f2f2f2;">1,94g</div>
<svg class="a" style="left:3630px;top:289px" width="34" height="26" viewBox="0 0 34 26"><path d="M2.5 13C9 1.5 25 1.5 31.5 13C25 24.5 9 24.5 2.5 13Z" fill="none" stroke="#009688" stroke-width="2"/><circle cx="17" cy="13" r="7.3" fill="#009688"/></svg>
<div class="a" style="left:2921px;top:335px;width:18px;height:18px;background:#1f1fff;"></div>
<div class="t" style="left:2957.0px;top:330.6px;font-size:26.4px;color:#f2f2f2;">Нависающие периметры</div>
<div class="t" style="left:3273.0px;top:330.6px;font-size:26.4px;color:#f2f2f2;">2s</div>
<div class="t" style="left:3375.0px;top:330.6px;font-size:26.4px;color:#f2f2f2;">0,2</div>
<div class="t" style="left:3449.0px;top:330.6px;font-size:26.4px;color:#f2f2f2;">0,00m</div>
<div class="t" style="left:3546.0px;top:330.6px;font-size:26.4px;color:#f2f2f2;">0,00g</div>
<svg class="a" style="left:3630px;top:331px" width="34" height="26" viewBox="0 0 34 26"><path d="M2.5 13C9 1.5 25 1.5 31.5 13C25 24.5 9 24.5 2.5 13Z" fill="none" stroke="#009688" stroke-width="2"/><circle cx="17" cy="13" r="7.3" fill="#009688"/></svg>
<div class="a" style="left:2921px;top:377px;width:18px;height:18px;background:#b12626;"></div>
<div class="t" style="left:2957.0px;top:372.6px;font-size:26.4px;color:#f2f2f2;">Заполнение</div>
<div class="t" style="left:3273.0px;top:372.6px;font-size:26.4px;color:#f2f2f2;">9m8s</div>
<div class="t" style="left:3375.0px;top:372.6px;font-size:26.4px;color:#f2f2f2;">30,9</div>
<div class="t" style="left:3449.0px;top:372.6px;font-size:26.4px;color:#f2f2f2;">1,18m</div>
<div class="t" style="left:3546.0px;top:372.6px;font-size:26.4px;color:#f2f2f2;">3,51g</div>
<svg class="a" style="left:3630px;top:373px" width="34" height="26" viewBox="0 0 34 26"><path d="M2.5 13C9 1.5 25 1.5 31.5 13C25 24.5 9 24.5 2.5 13Z" fill="none" stroke="#009688" stroke-width="2"/><circle cx="17" cy="13" r="7.3" fill="#009688"/></svg>
<div class="a" style="left:2921px;top:419px;width:18px;height:18px;background:#9a52cf;"></div>
<div class="t" style="left:2957.0px;top:414.6px;font-size:26.4px;color:#f2f2f2;">Сплошное заполнение</div>
<div class="t" style="left:3273.0px;top:414.6px;font-size:26.4px;color:#f2f2f2;">3m7s</div>
<div class="t" style="left:3375.0px;top:414.6px;font-size:26.4px;color:#f2f2f2;">10,5</div>
<div class="t" style="left:3449.0px;top:414.6px;font-size:26.4px;color:#f2f2f2;">0,53m</div>
<div class="t" style="left:3546.0px;top:414.6px;font-size:26.4px;color:#f2f2f2;">1,57g</div>
<svg class="a" style="left:3630px;top:415px" width="34" height="26" viewBox="0 0 34 26"><path d="M2.5 13C9 1.5 25 1.5 31.5 13C25 24.5 9 24.5 2.5 13Z" fill="none" stroke="#009688" stroke-width="2"/><circle cx="17" cy="13" r="7.3" fill="#009688"/></svg>
<div class="a" style="left:2921px;top:461px;width:18px;height:18px;background:#f0373a;"></div>
<div class="t" style="left:2957.0px;top:456.6px;font-size:26.4px;color:#f2f2f2;">Верхняя поверхность</div>
<div class="t" style="left:3273.0px;top:456.6px;font-size:26.4px;color:#f2f2f2;">46s</div>
<div class="t" style="left:3375.0px;top:456.6px;font-size:26.4px;color:#f2f2f2;">2,6</div>
<div class="t" style="left:3449.0px;top:456.6px;font-size:26.4px;color:#f2f2f2;">0,09m</div>
<div class="t" style="left:3546.0px;top:456.6px;font-size:26.4px;color:#f2f2f2;">0,27g</div>
<svg class="a" style="left:3630px;top:457px" width="34" height="26" viewBox="0 0 34 26"><path d="M2.5 13C9 1.5 25 1.5 31.5 13C25 24.5 9 24.5 2.5 13Z" fill="none" stroke="#009688" stroke-width="2"/><circle cx="17" cy="13" r="7.3" fill="#009688"/></svg>
<div class="a" style="left:2921px;top:503px;width:18px;height:18px;background:#6d5bd0;"></div>
<div class="t" style="left:2957.0px;top:498.6px;font-size:26.4px;color:#f2f2f2;">Нижняя поверхность</div>
<div class="t" style="left:3273.0px;top:498.6px;font-size:26.4px;color:#f2f2f2;">56s</div>
<div class="t" style="left:3375.0px;top:498.6px;font-size:26.4px;color:#f2f2f2;">3,2</div>
<div class="t" style="left:3449.0px;top:498.6px;font-size:26.4px;color:#f2f2f2;">0,09m</div>
<div class="t" style="left:3546.0px;top:498.6px;font-size:26.4px;color:#f2f2f2;">0,28g</div>
<svg class="a" style="left:3630px;top:499px" width="34" height="26" viewBox="0 0 34 26"><path d="M2.5 13C9 1.5 25 1.5 31.5 13C25 24.5 9 24.5 2.5 13Z" fill="none" stroke="#009688" stroke-width="2"/><circle cx="17" cy="13" r="7.3" fill="#009688"/></svg>
<div class="a" style="left:2921px;top:545px;width:18px;height:18px;background:#4a62a6;"></div>
<div class="t" style="left:2957.0px;top:540.6px;font-size:26.4px;color:#f2f2f2;">Мосты</div>
<div class="t" style="left:3273.0px;top:540.6px;font-size:26.4px;color:#f2f2f2;">4s</div>
<div class="t" style="left:3375.0px;top:540.6px;font-size:26.4px;color:#f2f2f2;">0,3</div>
<div class="t" style="left:3449.0px;top:540.6px;font-size:26.4px;color:#f2f2f2;">0,00m</div>
<div class="t" style="left:3546.0px;top:540.6px;font-size:26.4px;color:#f2f2f2;">0,01g</div>
<svg class="a" style="left:3630px;top:541px" width="34" height="26" viewBox="0 0 34 26"><path d="M2.5 13C9 1.5 25 1.5 31.5 13C25 24.5 9 24.5 2.5 13Z" fill="none" stroke="#009688" stroke-width="2"/><circle cx="17" cy="13" r="7.3" fill="#009688"/></svg>
<div class="a" style="left:2921px;top:587px;width:18px;height:18px;background:#4a86c9;"></div>
<div class="t" style="left:2957.0px;top:582.6px;font-size:26.4px;color:#f2f2f2;">Внутренний мост</div>
<div class="t" style="left:3273.0px;top:582.6px;font-size:26.4px;color:#f2f2f2;">59s</div>
<div class="t" style="left:3375.0px;top:582.6px;font-size:26.4px;color:#f2f2f2;">3,4</div>
<div class="t" style="left:3449.0px;top:582.6px;font-size:26.4px;color:#f2f2f2;">0,13m</div>
<div class="t" style="left:3546.0px;top:582.6px;font-size:26.4px;color:#f2f2f2;">0,40g</div>
<svg class="a" style="left:3630px;top:583px" width="34" height="26" viewBox="0 0 34 26"><path d="M2.5 13C9 1.5 25 1.5 31.5 13C25 24.5 9 24.5 2.5 13Z" fill="none" stroke="#009688" stroke-width="2"/><circle cx="17" cy="13" r="7.3" fill="#009688"/></svg>
<div class="a" style="left:2921px;top:629px;width:18px;height:18px;background:#5bd18f;"></div>
<div class="t" style="left:2957.0px;top:624.6px;font-size:26.4px;color:#f2f2f2;">Пользовательский</div>
<div class="t" style="left:3273.0px;top:624.6px;font-size:26.4px;color:#f2f2f2;">15s</div>
<div class="t" style="left:3375.0px;top:624.6px;font-size:26.4px;color:#f2f2f2;">0,9</div>
<div class="t" style="left:3449.0px;top:624.6px;font-size:26.4px;color:#f2f2f2;">0,03m</div>
<div class="t" style="left:3546.0px;top:624.6px;font-size:26.4px;color:#f2f2f2;">0,08g</div>
<svg class="a" style="left:3630px;top:625px" width="34" height="26" viewBox="0 0 34 26"><path d="M2 13C8 4 26 4 32 13C26 22 8 22 2 13Z" fill="none" stroke="#8a8a8a" stroke-width="2"/><circle cx="17" cy="13" r="6" fill="none" stroke="#8a8a8a" stroke-width="2"/><path d="M5 2L29 24" stroke="#8a8a8a" stroke-width="2"/></svg>
<div class="a" style="left:2921px;top:671px;width:18px;height:18px;background:#3342a3;"></div>
<div class="t" style="left:2957.0px;top:666.6px;font-size:26.4px;color:#f2f2f2;">Перемещения</div>
<div class="t" style="left:3273.0px;top:666.6px;font-size:26.4px;color:#f2f2f2;">2m20s</div>
<div class="t" style="left:3375.0px;top:666.6px;font-size:26.4px;color:#f2f2f2;">7,9</div>
<svg class="a" style="left:3630px;top:667px" width="34" height="26" viewBox="0 0 34 26"><path d="M2 13C8 4 26 4 32 13C26 22 8 22 2 13Z" fill="none" stroke="#8a8a8a" stroke-width="2"/><circle cx="17" cy="13" r="6" fill="none" stroke="#8a8a8a" stroke-width="2"/><path d="M5 2L29 24" stroke="#8a8a8a" stroke-width="2"/></svg>
<div class="a" style="left:2921px;top:713px;width:18px;height:18px;background:#d41fd4;"></div>
<div class="t" style="left:2957.0px;top:708.6px;font-size:26.4px;color:#f2f2f2;">Откат</div>
<svg class="a" style="left:3630px;top:709px" width="34" height="26" viewBox="0 0 34 26"><path d="M2 13C8 4 26 4 32 13C26 22 8 22 2 13Z" fill="none" stroke="#8a8a8a" stroke-width="2"/><circle cx="17" cy="13" r="6" fill="none" stroke="#8a8a8a" stroke-width="2"/><path d="M5 2L29 24" stroke="#8a8a8a" stroke-width="2"/></svg>
<div class="a" style="left:2921px;top:755px;width:18px;height:18px;background:#46abd1;"></div>
<div class="t" style="left:2957.0px;top:750.6px;font-size:26.4px;color:#f2f2f2;">Подача</div>
<svg class="a" style="left:3630px;top:751px" width="34" height="26" viewBox="0 0 34 26"><path d="M2 13C8 4 26 4 32 13C26 22 8 22 2 13Z" fill="none" stroke="#8a8a8a" stroke-width="2"/><circle cx="17" cy="13" r="6" fill="none" stroke="#8a8a8a" stroke-width="2"/><path d="M5 2L29 24" stroke="#8a8a8a" stroke-width="2"/></svg>
<div class="a" style="left:2921px;top:797px;width:18px;height:18px;background:#ffff00;"></div>
<div class="t" style="left:2957.0px;top:792.6px;font-size:26.4px;color:#f2f2f2;">Очистка</div>
<svg class="a" style="left:3630px;top:793px" width="34" height="26" viewBox="0 0 34 26"><path d="M2 13C8 4 26 4 32 13C26 22 8 22 2 13Z" fill="none" stroke="#8a8a8a" stroke-width="2"/><circle cx="17" cy="13" r="6" fill="none" stroke="#8a8a8a" stroke-width="2"/><path d="M5 2L29 24" stroke="#8a8a8a" stroke-width="2"/></svg>
<div class="a" style="left:2921px;top:839px;width:18px;height:18px;background:#e6e6e6;"></div>
<div class="t" style="left:2957.0px;top:834.6px;font-size:26.4px;color:#f2f2f2;">Швы</div>
<svg class="a" style="left:3630px;top:835px" width="34" height="26" viewBox="0 0 34 26"><path d="M2.5 13C9 1.5 25 1.5 31.5 13C25 24.5 9 24.5 2.5 13Z" fill="none" stroke="#009688" stroke-width="2"/><circle cx="17" cy="13" r="7.3" fill="#009688"/></svg>
<div class="t" style="left:2911.0px;top:887.2px;font-size:25.7px;color:#ffffff;font-weight:700;">Общая оценка</div>
<div class="a" style="left:2895px;top:920px;width:785px;height:1.5px;background:#8c8c8c;"></div>
<div class="t" style="left:2911.0px;top:925.7px;font-size:26.3px;color:#f2f2f2;">Всего использовано прутка:</div>
<div class="t" style="left:3256.0px;top:925.7px;font-size:26.3px;color:#f2f2f2;">3,38 m</div>
<div class="t" style="left:3358.0px;top:925.7px;font-size:26.3px;color:#f2f2f2;">10,09 g</div>
<div class="t" style="left:2911.0px;top:959.7px;font-size:26.3px;color:#f2f2f2;">Исп. прутка для моделей:</div>
<div class="t" style="left:3256.0px;top:959.7px;font-size:26.3px;color:#f2f2f2;">3,38 m</div>
<div class="t" style="left:3358.0px;top:959.7px;font-size:26.3px;color:#f2f2f2;">10,09 g</div>
<div class="t" style="left:2911.0px;top:993.7px;font-size:26.3px;color:#f2f2f2;">Стоимость:</div>
<div class="t" style="left:3256.0px;top:993.7px;font-size:26.3px;color:#f2f2f2;">0,20</div>
<div class="t" style="left:2911.0px;top:1027.7px;font-size:26.3px;color:#f2f2f2;">Время подготовки:</div>
<div class="t" style="left:3256.0px;top:1027.7px;font-size:26.3px;color:#f2f2f2;">14s</div>
<div class="t" style="left:2911.0px;top:1061.7px;font-size:26.3px;color:#f2f2f2;">Расчётное время печати:</div>
<div class="t" style="left:3256.0px;top:1061.7px;font-size:26.3px;color:#f2f2f2;">29m18s</div>
<div class="t" style="left:2911.0px;top:1095.7px;font-size:26.3px;color:#f2f2f2;">Общее время печати:</div>
<div class="t" style="left:3256.0px;top:1095.7px;font-size:26.3px;color:#f2f2f2;">29m33s</div>
<div class="a" style="left:3157px;top:1142px;width:523px;height:820px;background:rgba(26,26,26,0.81);border-radius:14px;"></div>
<div class="a" style="left:3161px;top:1536px;width:515px;height:35px;background:transparent;border:1.5px solid #e07a3a;box-sizing:border-box;"></div>
<div class="t" style="left:3165.0px;top:1166.0px;font-size:26px;color:#f08848;">49904</div>
<div class="t" style="left:3247.0px;top:1166.0px;font-size:26px;color:#d6d600;transform:scaleX(0.97);transform-origin:0 0;">G1</div>
<div class="t" style="left:3287.0px;top:1166.0px;font-size:26px;color:#f4f4f4;transform:scaleX(0.98);transform-origin:0 0;">F1200</div>
<div class="t" style="left:3165.0px;top:1200.0px;font-size:26px;color:#f08848;">49905</div>
<div class="t" style="left:3247.0px;top:1200.0px;font-size:26px;color:#d6d600;transform:scaleX(0.97);transform-origin:0 0;">G1</div>
<div class="t" style="left:3287.0px;top:1200.0px;font-size:26px;color:#f4f4f4;transform:scaleX(0.98);transform-origin:0 0;">X-2.548 Y6.918 E.0842</div>
<div class="t" style="left:3165.0px;top:1234.0px;font-size:26px;color:#f08848;">49906</div>
<div class="t" style="left:3247.0px;top:1234.0px;font-size:26px;color:#d6d600;transform:scaleX(0.903);transform-origin:0 0;">SET_VELOCITY_LIMIT</div>
<div class="t" style="left:3504.0px;top:1234.0px;font-size:26px;color:#f4f4f4;transform:scaleX(0.953);transform-origin:0 0;">ACCEL=10000</div>
<div class="t" style="left:3165.0px;top:1268.0px;font-size:26px;color:#f08848;">49907</div>
<div class="t" style="left:3247.0px;top:1268.0px;font-size:26px;color:#d6d600;transform:scaleX(0.97);transform-origin:0 0;">G1</div>
<div class="t" style="left:3287.0px;top:1268.0px;font-size:26px;color:#f4f4f4;transform:scaleX(0.98);transform-origin:0 0;">X-2.548 Y6.369 F30000</div>
<div class="t" style="left:3165.0px;top:1302.0px;font-size:26px;color:#f08848;">49908</div>
<div class="t" style="left:3247.0px;top:1302.0px;font-size:26px;color:#d6d600;transform:scaleX(0.903);transform-origin:0 0;">SET_VELOCITY_LIMIT</div>
<div class="t" style="left:3504.0px;top:1302.0px;font-size:26px;color:#f4f4f4;transform:scaleX(0.953);transform-origin:0 0;">ACCEL=2000</div>
<div class="t" style="left:3165.0px;top:1336.0px;font-size:26px;color:#f08848;">49909</div>
<div class="t" style="left:3247.0px;top:1336.0px;font-size:26px;color:#d6d600;transform:scaleX(0.97);transform-origin:0 0;">G1</div>
<div class="t" style="left:3287.0px;top:1336.0px;font-size:26px;color:#f4f4f4;transform:scaleX(0.98);transform-origin:0 0;">F1200</div>
<div class="t" style="left:3165.0px;top:1370.0px;font-size:26px;color:#f08848;">49910</div>
<div class="t" style="left:3247.0px;top:1370.0px;font-size:26px;color:#d6d600;transform:scaleX(0.97);transform-origin:0 0;">G1</div>
<div class="t" style="left:3287.0px;top:1370.0px;font-size:26px;color:#f4f4f4;transform:scaleX(0.98);transform-origin:0 0;">X-1.214 Y5.035 E.05966</div>
<div class="t" style="left:3165.0px;top:1404.0px;font-size:26px;color:#f08848;">49911</div>
<div class="t" style="left:3247.0px;top:1404.0px;font-size:26px;color:#d6d600;transform:scaleX(0.903);transform-origin:0 0;">SET_VELOCITY_LIMIT</div>
<div class="t" style="left:3504.0px;top:1404.0px;font-size:26px;color:#f4f4f4;transform:scaleX(0.953);transform-origin:0 0;">ACCEL=10000</div>
<div class="t" style="left:3165.0px;top:1438.0px;font-size:26px;color:#f08848;">49912</div>
<div class="t" style="left:3247.0px;top:1438.0px;font-size:26px;color:#d6d600;transform:scaleX(0.97);transform-origin:0 0;">G1</div>
<div class="t" style="left:3287.0px;top:1438.0px;font-size:26px;color:#f4f4f4;transform:scaleX(0.98);transform-origin:0 0;">X-1.763 Y5.035 F30000</div>
<div class="t" style="left:3165.0px;top:1472.0px;font-size:26px;color:#f08848;">49913</div>
<div class="t" style="left:3247.0px;top:1472.0px;font-size:26px;color:#d6d600;transform:scaleX(0.903);transform-origin:0 0;">SET_VELOCITY_LIMIT</div>
<div class="t" style="left:3504.0px;top:1472.0px;font-size:26px;color:#f4f4f4;transform:scaleX(0.953);transform-origin:0 0;">ACCEL=2000</div>
<div class="t" style="left:3165.0px;top:1506.0px;font-size:26px;color:#f08848;">49914</div>
<div class="t" style="left:3247.0px;top:1506.0px;font-size:26px;color:#d6d600;transform:scaleX(0.97);transform-origin:0 0;">G1</div>
<div class="t" style="left:3287.0px;top:1506.0px;font-size:26px;color:#f4f4f4;transform:scaleX(0.98);transform-origin:0 0;">F1200</div>
<div class="t" style="left:3165.0px;top:1540.0px;font-size:26px;color:#f08848;">49915</div>
<div class="t" style="left:3247.0px;top:1540.0px;font-size:26px;color:#d6d600;transform:scaleX(0.97);transform-origin:0 0;">G1</div>
<div class="t" style="left:3287.0px;top:1540.0px;font-size:26px;color:#f4f4f4;transform:scaleX(0.98);transform-origin:0 0;">X-2.548 Y5.82 E.03512</div>
<div class="t" style="left:3165.0px;top:1574.0px;font-size:26px;color:#f08848;">49916</div>
<div class="t" style="left:3247.0px;top:1574.0px;font-size:26px;color:#d6d600;transform:scaleX(0.97);transform-origin:0 0;">G1</div>
<div class="t" style="left:3287.0px;top:1574.0px;font-size:26px;color:#f4f4f4;transform:scaleX(0.98);transform-origin:0 0;">E-.8 F2100</div>
<div class="t" style="left:3165.0px;top:1608.0px;font-size:26px;color:#f08848;">49917</div>
<div class="t" style="left:3247.0px;top:1608.0px;font-size:26px;color:#b8b8b8;transform:scaleX(0.906);transform-origin:0 0;">;WIPE_START</div>
<div class="t" style="left:3165.0px;top:1642.0px;font-size:26px;color:#f08848;">49918</div>
<div class="t" style="left:3247.0px;top:1642.0px;font-size:26px;color:#d6d600;transform:scaleX(0.97);transform-origin:0 0;">G1</div>
<div class="t" style="left:3287.0px;top:1642.0px;font-size:26px;color:#f4f4f4;transform:scaleX(0.98);transform-origin:0 0;">F12000</div>
<div class="t" style="left:3165.0px;top:1676.0px;font-size:26px;color:#f08848;">49919</div>
<div class="t" style="left:3247.0px;top:1676.0px;font-size:26px;color:#d6d600;transform:scaleX(0.97);transform-origin:0 0;">G1</div>
<div class="t" style="left:3287.0px;top:1676.0px;font-size:26px;color:#f4f4f4;transform:scaleX(0.98);transform-origin:0 0;">X-1.763 Y5.035</div>
<div class="t" style="left:3165.0px;top:1710.0px;font-size:26px;color:#f08848;">49920</div>
<div class="t" style="left:3247.0px;top:1710.0px;font-size:26px;color:#b8b8b8;transform:scaleX(0.906);transform-origin:0 0;">;WIPE_END</div>
<div class="t" style="left:3165.0px;top:1744.0px;font-size:26px;color:#f08848;">49921</div>
<div class="t" style="left:3247.0px;top:1744.0px;font-size:26px;color:#d6d600;transform:scaleX(0.97);transform-origin:0 0;">M106</div>
<div class="t" style="left:3318.0px;top:1744.0px;font-size:26px;color:#f4f4f4;transform:scaleX(0.98);transform-origin:0 0;">S0</div>
<div class="t" style="left:3165.0px;top:1778.0px;font-size:26px;color:#f08848;">49922</div>
<div class="t" style="left:3247.0px;top:1778.0px;font-size:26px;color:#d6d600;transform:scaleX(0.97);transform-origin:0 0;">M106</div>
<div class="t" style="left:3318.0px;top:1778.0px;font-size:26px;color:#f4f4f4;transform:scaleX(0.98);transform-origin:0 0;">P2 S0</div>
<div class="t" style="left:3165.0px;top:1812.0px;font-size:26px;color:#f08848;">49923</div>
<div class="t" style="left:3247.0px;top:1812.0px;font-size:26px;color:#b8b8b8;transform:scaleX(0.95);transform-origin:0 0;">;TYPE:Custom</div>
<div class="t" style="left:3165.0px;top:1846.0px;font-size:26px;color:#f08848;">49924</div>
<div class="t" style="left:3247.0px;top:1846.0px;font-size:26px;color:#b8b8b8;transform:scaleX(1.0);transform-origin:0 0;">; filament end gcode</div>
<div class="t" style="left:3165.0px;top:1880.0px;font-size:26px;color:#f08848;">49925</div>
<div class="t" style="left:3247.0px;top:1880.0px;font-size:26px;color:#d6d600;transform:scaleX(0.97);transform-origin:0 0;">G1</div>
<div class="t" style="left:3287.0px;top:1880.0px;font-size:26px;color:#f4f4f4;transform:scaleX(0.98);transform-origin:0 0;">E-3 F3600</div>
<div class="t" style="left:3165.0px;top:1914.0px;font-size:26px;color:#f08848;">49926</div>
<div class="t" style="left:3247.0px;top:1914.0px;font-size:26px;color:#d6d600;transform:scaleX(0.97);transform-origin:0 0;">G0</div>
<div class="t" style="left:3287.0px;top:1914.0px;font-size:26px;color:#f4f4f4;transform:scaleX(0.98);transform-origin:0 0;">X50 Y50 F30000</div>
<div class="a" style="left:3773px;top:470px;width:30px;height:1266px;background:#ffffff;border-radius:15px;"></div>
<div class="a" style="left:3779px;top:478px;width:17px;height:1250px;background:#009688;border-radius:8px;"></div>
<div class="a" style="left:3772px;top:465px;width:30px;height:30px;background:#ffffff;border-radius:15px;"></div>
<div class="a" style="left:3775px;top:468px;width:24px;height:24px;background:#009688;border-radius:12px;"></div>
<svg class="a" style="left:3775px;top:468px;" width="24" height="24" viewBox="0 0 24 24"><path d="M12 5V19M5 12H19" stroke="#fff" stroke-width="1.8"/></svg>
<div class="a" style="left:3772px;top:1708px;width:30px;height:30px;background:#ffffff;border-radius:15px;"></div>
<div class="a" style="left:3775px;top:1711px;width:24px;height:24px;background:#009688;border-radius:12px;"></div>
<div class="a" style="left:3685px;top:414px;width:77px;height:64px;background:#ffffff;border-radius:6px;"></div>
<svg class="a" style="left:3755px;top:462px;" width="24" height="22" viewBox="0 0 24 22"><path d="M0 0L22 20L0 16Z" fill="#fff"/></svg>
<div class="t" style="left:3227.0px;width:1000px;text-align:center;top:417.8px;font-size:25px;color:#009688;">200</div>
<div class="t" style="left:3223.0px;width:1000px;text-align:center;top:447.8px;font-size:25px;color:#009688;">40,00</div>
<div class="a" style="left:3693px;top:1724px;width:69px;height:64px;background:#ffffff;border-radius:6px;"></div>
<svg class="a" style="left:3752px;top:1712px;" width="24" height="20" viewBox="0 0 24 20"><path d="M0 12L20 0L10 14Z" fill="#fff"/></svg>
<div class="t" style="left:3227.0px;width:1000px;text-align:center;top:1727.8px;font-size:25px;color:#009688;">1</div>
<div class="t" style="left:3227.0px;width:1000px;text-align:center;top:1757.8px;font-size:25px;color:#009688;">0,20</div>
<div class="a" style="left:1460px;top:2014px;width:1600px;height:29px;background:#ffffff;border-radius:15px;"></div>
<div class="a" style="left:1466px;top:2020px;width:1581px;height:17px;background:#009688;border-radius:8px;"></div>
<div class="a" style="left:3032px;top:2013px;width:30px;height:30px;background:#ffffff;border-radius:15px;"></div>
<div class="a" style="left:3035px;top:2016px;width:24px;height:24px;background:#009688;border-radius:12px;"></div>
<div class="a" style="left:3071px;top:2011px;width:42px;height:33px;background:#ffffff;border-radius:5px;"></div>
<svg class="a" style="left:3060px;top:2022px;" width="12" height="12" viewBox="0 0 12 12"><path d="M12 0L0 6L12 12Z" fill="#fff"/></svg>
<div class="t" style="left:2592.0px;width:1000px;text-align:center;top:2017.7px;font-size:24px;color:#009688;">49</div>
<svg class="a" style="left:3720px;top:1960px;" width="110" height="100" viewBox="0 0 110 100"><path d="M50.6,17.6 L84,33 L84,67 L50.6,83.5 L17,67 L17,33 Z" fill="#fff" stroke="#fff" stroke-width="8" stroke-linejoin="round"/><path d="M50.6,22 L80.6,35.9 L50.6,50 L20.4,35.9 Z" fill="#009688" stroke="#009688" stroke-width="3" stroke-linejoin="round"/><path d="M20.4,50.5 L29.5,45.8 L50.6,55.5 L71.5,45.8 L80.6,50.5 L50.6,64.5 Z" fill="#009688" stroke="#009688" stroke-width="3" stroke-linejoin="round"/><path d="M20.4,64.8 L29.5,60.1 L50.6,69.8 L71.5,60.1 L80.6,64.8 L50.6,78.8 Z" fill="#009688" stroke="#009688" stroke-width="3" stroke-linejoin="round"/></svg>
<div class="a" style="left:0px;top:2068px;width:3840px;height:12px;background:#f2f2f2;"></div>
<div class="a" style="left:0px;top:2080px;width:3840px;height:80px;background:#e8d8da;"></div>
<svg class="a" style="left:31px;top:2102px;" width="34" height="34" viewBox="0 0 34 34"><path d="M0 4.5L14 2.6V16H0Z M16 2.3L34 0V16H16Z M0 18H14V31.4L0 29.5Z M16 18H34V34L16 31.7Z" fill="#000"/></svg>
<svg class="a" style="left:120px;top:2096px;" width="48" height="48" viewBox="0 0 48 48"><circle cx="29" cy="19" r="14" fill="none" stroke="#000" stroke-width="3.5"/><path d="M19 29L4 44" stroke="#000" stroke-width="4" stroke-linecap="round"/></svg>
<svg class="a" style="left:222px;top:2103px;" width="36" height="34" viewBox="0 0 36 34"><path d="M2 2H22M2 32H22M4 6V28M20 6V28M30 2V12M30 18V32" stroke="#000" stroke-width="2.6" fill="none"/><circle cx="30" cy="15" r="3" fill="#000"/></svg>
<div class="a" style="left:318px;top:2096px;width:48px;height:48px;background:#ffffff;border-radius:24px;"></div>
<svg class="a" style="left:318px;top:2096px;" width="48" height="48" viewBox="0 0 48 48"><path d="M12 13L24 26L37 12M24 26V40" stroke="#f24a2a" stroke-width="5" fill="none"/><path d="M29 20L37 12" stroke="#e84be0" stroke-width="5"/></svg>
<svg class="a" style="left:418px;top:2101px;" width="44" height="38" viewBox="0 0 44 38"><path d="M1 3H15L18 7H42V34H1Z" fill="#f5c23a"/><path d="M1 10H42V34H1Z" fill="#ffd75e"/><path d="M13 34V22H30V34H25V27H18V34Z" fill="#2f7fd8"/></svg>
<svg class="a" style="left:512px;top:2100px;" width="50" height="40" viewBox="0 0 50 40"><rect x="1" y="2" width="36" height="26" rx="2" fill="#3aa0b8"/><path d="M6 22C8 12 14 10 25 10C36 10 42 12 46 24C49 34 43 37 38 32L33 27H18L13 32C8 37 3 34 6 22Z" fill="#2a2aa0" stroke="#141460" stroke-width="2"/></svg>
<div class="a" style="left:614px;top:2096px;width:43px;height:43px;background:#2aa3e3;border-radius:22px;"></div>
<svg class="a" style="left:614px;top:2096px;" width="43" height="43" viewBox="0 0 43 43"><path d="M8 21L34 11L29 33L21 27L16 31V25L30 15L18 24Z" fill="#fff"/></svg>
<div class="a" style="left:631px;top:2127px;width:44px;height:22px;background:#e84040;border-radius:8px;"></div>
<div class="t" style="left:153.0px;width:1000px;text-align:center;top:2128.9px;font-size:19px;color:#ffffff;">..23</div>
<div class="a" style="left:710px;top:2096px;width:48px;height:48px;background:#222222;"></div>
<svg class="a" style="left:710px;top:2096px;" width="48" height="48" viewBox="0 0 48 48"><path d="M12 40L20 8H26L23 20H29L32 8H38L30 40H24L27 27H21L18 40Z" fill="#fff"/></svg>
<svg class="a" style="left:806px;top:2097px;" width="50" height="46" viewBox="0 0 50 46"><rect x="12" y="2" width="36" height="42" rx="3" fill="#2b6ad1"/><rect x="12" y="16" width="36" height="14" fill="#1f57b8"/><rect x="2" y="12" width="26" height="24" rx="2" fill="#1d4fa8"/><path d="M6 17L9 31L14 21L19 31L23 17" fill="none" stroke="#fff" stroke-width="2.4"/></svg>
<div class="a" style="left:882px;top:2080px;width:96px;height:80px;background:#f3eded;"></div>
<div class="a" style="left:906px;top:2097px;width:48px;height:46px;background:#eeeeee;border-radius:24px;"></div>
<svg class="a" style="left:906px;top:2097px;" width="48" height="46" viewBox="0 0 48 46"><path d="M12 10C24 2 38 8 38 20C38 30 30 38 18 40C26 32 16 26 12 10Z" fill="#1a1a1a"/><path d="M14 34L40 20L34 30Z" fill="#00a896"/><circle cx="29" cy="13" r="2.5" fill="#fff"/></svg>
<div class="a" style="left:302px;top:2156px;width:80px;height:4px;background:#d49ab8;"></div>
<div class="a" style="left:400px;top:2156px;width:80px;height:4px;background:#d49ab8;"></div>
<div class="a" style="left:596px;top:2156px;width:80px;height:4px;background:#d49ab8;"></div>
<div class="a" style="left:694px;top:2156px;width:80px;height:4px;background:#d49ab8;"></div>
<div class="a" style="left:792px;top:2156px;width:80px;height:4px;background:#d49ab8;"></div>
<div class="a" style="left:882px;top:2156px;width:96px;height:4px;background:#d49ab8;"></div>
<svg class="a" style="left:3386px;top:2110px;" width="32" height="20" viewBox="0 0 32 20"><path d="M3 17L16 4L29 17" fill="none" stroke="#000" stroke-width="2"/></svg>
<svg class="a" style="left:3438px;top:2108px;" width="28" height="28" viewBox="0 0 28 28"><path d="M2 26A24 24 0 0 1 26 2M8 26A18 18 0 0 1 26 8M14 26A12 12 0 0 1 26 14" fill="none" stroke="#000" stroke-width="2"/><circle cx="23" cy="23" r="3" fill="#000"/></svg>
<svg class="a" style="left:3480px;top:2105px;" width="36" height="32" viewBox="0 0 36 32"><path d="M2 10H8L16 3V29L8 22H2Z" fill="none" stroke="#000" stroke-width="2"/><path d="M21 11A6 6 0 0 1 21 21M25 7A11 11 0 0 1 25 25" fill="none" stroke="#000" stroke-width="2"/><path d="M29 3A16 16 0 0 1 29 29" fill="none" stroke="#999" stroke-width="1.6"/></svg>
<div class="t" style="left:3538.0px;top:2111.2px;font-size:21px;color:#000000;">РУС</div>
<div class="t" style="left:3163.0px;width:1000px;text-align:center;top:2091.9px;font-size:22px;color:#000000;">17:39</div>
<div class="t" style="left:3164.0px;width:1000px;text-align:center;top:2128.3px;font-size:22.4px;color:#000000;">21.01.2026</div>
<svg class="a" style="left:3756px;top:2102px;" width="36" height="36" viewBox="0 0 36 36"><path d="M2 2H34V26H22L18 31L14 26H2Z" fill="none" stroke="#000" stroke-width="2.2"/></svg>
<div class="a" style="left:3831px;top:2080px;width:1px;height:80px;background:#a9a0a2;"></div>
</body></html>
